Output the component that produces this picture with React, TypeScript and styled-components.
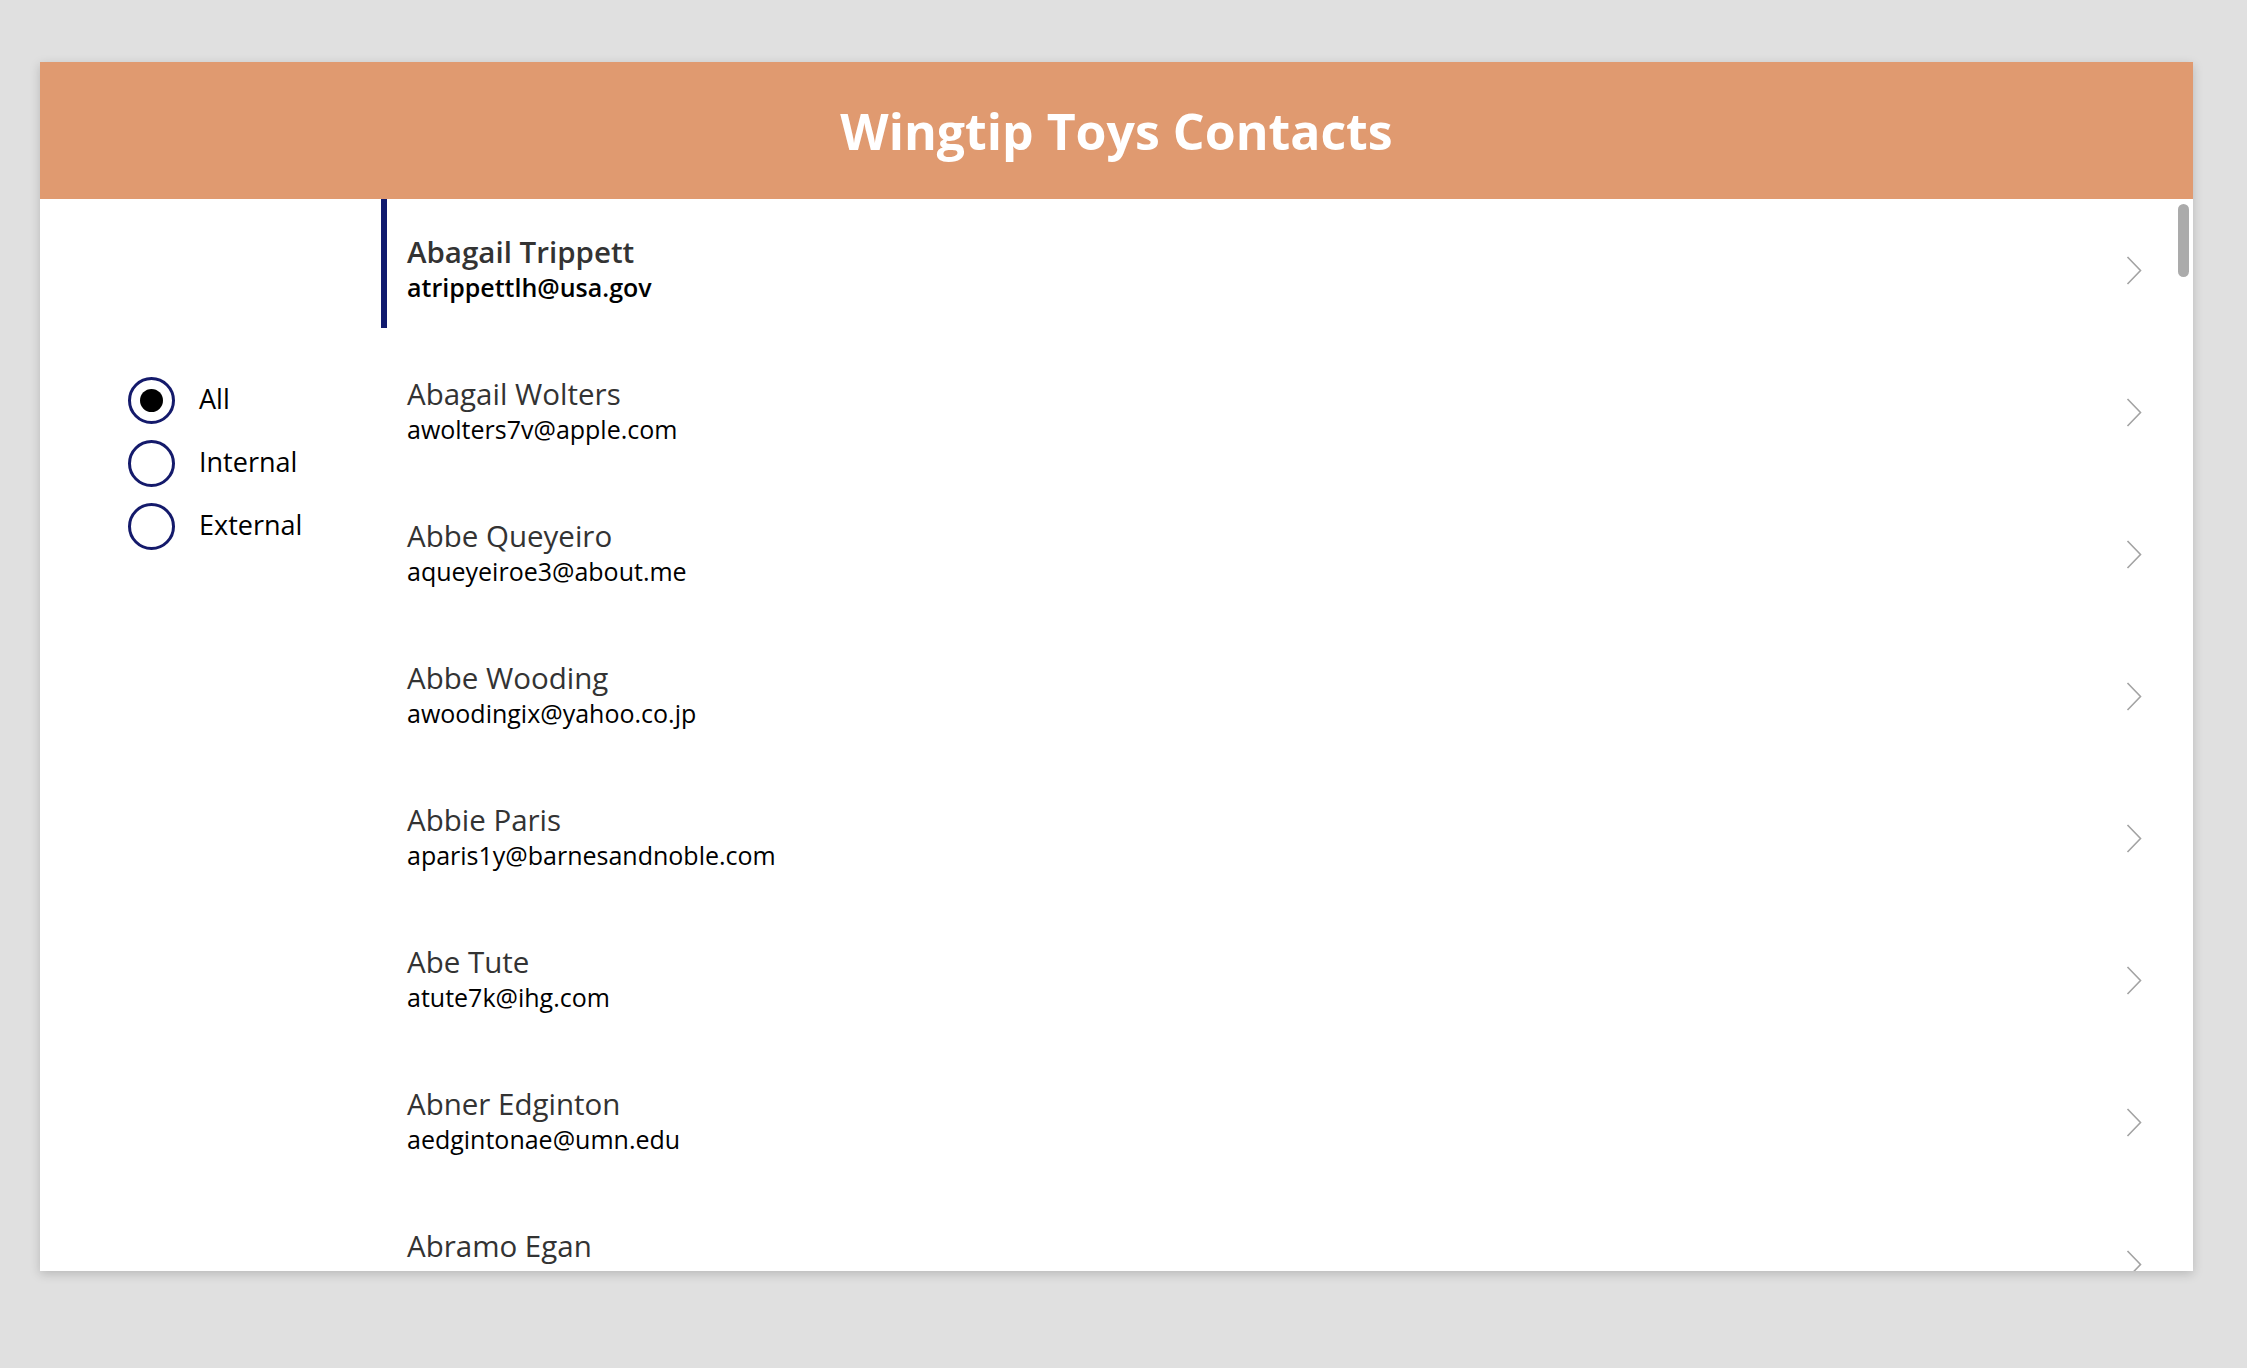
import React from "react";
import styled, { createGlobalStyle } from "styled-components";

const GlobalStyle = createGlobalStyle`
  html, body {
    margin: 0;
    padding: 0;
    background: #e0e0e0;
    font-family: "Open Sans", "Noto Sans", sans-serif;
  }
  * { box-sizing: border-box; }
`;

const Page = styled.div`
  width: 2247px;
  height: 1368px;
  padding: 62px 54px 0 40px;
  background: #e0e0e0;
`;

const Card = styled.div`
  position: relative;
  width: 2153px;
  height: 1209px;
  background: #ffffff;
  box-shadow: 0 3px 10px rgba(0, 0, 0, 0.18);
  display: flex;
  flex-direction: column;
  overflow: hidden;
`;

const Header = styled.header`
  height: 137px;
  flex: none;
  background: #e09a70;
  display: flex;
  align-items: center;
  justify-content: center;
`;

const Title = styled.h1`
  margin: 0;
  color: #ffffff;
  font-family: "Open Sans", sans-serif;
  font-weight: 700;
  font-size: 50px;
  line-height: 1;
  letter-spacing: 0;
`;

const Body = styled.div`
  flex: 1;
  display: flex;
  min-height: 0;
`;

const FilterPanel = styled.div`
  width: 341px;
  flex: none;
  padding: 170px 0 0 88px;
  display: flex;
  flex-direction: column;
`;

const RadioItem = styled.label`
  height: 63px;
  display: flex;
  align-items: center;
  gap: 24px;
  cursor: pointer;
`;

const RadioCircle = styled.span<{ $checked: boolean }>`
  width: 47px;
  height: 47px;
  flex: none;
  border-radius: 50%;
  border: 3px solid #141a6b;
  display: flex;
  align-items: center;
  justify-content: center;
  &::after {
    content: "";
    width: 23px;
    height: 23px;
    border-radius: 50%;
    background: #000000;
    display: ${(p) => (p.$checked ? "block" : "none")};
  }
`;

const RadioLabel = styled.span`
  font-size: 27px;
  color: #000000;
  line-height: 1;
  margin-top: -4px;
`;

const List = styled.div`
  flex: 1;
  display: flex;
  flex-direction: column;
  position: relative;
`;

const Row = styled.div<{ $selected: boolean }>`
  height: 142px;
  flex: none;
  position: relative;
  display: flex;
  align-items: flex-start;
  padding: 34px 51px 0 26px;
  &::before {
    content: "";
    position: absolute;
    left: 0;
    top: 0;
    width: 6px;
    height: 129px;
    background: #101a6e;
    display: ${(p) => (p.$selected ? "block" : "none")};
  }
`;

const TextBlock = styled.div`
  flex: 1;
  display: flex;
  flex-direction: column;
`;

const Name = styled.div<{ $selected: boolean }>`
  font-size: 29.5px;
  line-height: 38px;
  color: #333333;
  font-weight: ${(p) => (p.$selected ? 600 : 400)};
`;

const Email = styled.div<{ $selected: boolean }>`
  margin-top: 1px;
  font-size: 25px;
  line-height: 30px;
  color: #000000;
  font-weight: ${(p) => (p.$selected ? 600 : 400)};
`;

const Chevron = styled.svg`
  flex: none;
  width: 16px;
  height: 29px;
  margin-top: 23px;
`;

const ScrollThumb = styled.div`
  position: absolute;
  top: 5px;
  right: 4px;
  width: 11px;
  height: 73px;
  border-radius: 6px;
  background: #ababab;
`;

const contacts = [
  { name: "Abagail Trippett", email: "atrippettlh@usa.gov" },
  { name: "Abagail Wolters", email: "awolters7v@apple.com" },
  { name: "Abbe Queyeiro", email: "aqueyeiroe3@about.me" },
  { name: "Abbe Wooding", email: "awoodingix@yahoo.co.jp" },
  { name: "Abbie Paris", email: "aparis1y@barnesandnoble.com" },
  { name: "Abe Tute", email: "atute7k@ihg.com" },
  { name: "Abner Edginton", email: "aedgintonae@umn.edu" },
  { name: "Abramo Egan", email: "aegan2q@ucla.edu" },
];

const filters = ["All", "Internal", "External"];

export default function App() {
  return (
    <>
      <GlobalStyle />
      <Page>
        <Card>
          <Header>
            <Title>Wingtip Toys Contacts</Title>
          </Header>
          <Body>
            <FilterPanel>
              {filters.map((f, i) => (
                <RadioItem key={f}>
                  <RadioCircle $checked={i === 0} />
                  <RadioLabel>{f}</RadioLabel>
                </RadioItem>
              ))}
            </FilterPanel>
            <List>
              {contacts.map((c, i) => (
                <Row key={c.email} $selected={i === 0}>
                  <TextBlock>
                    <Name $selected={i === 0}>{c.name}</Name>
                    <Email $selected={i === 0}>{c.email}</Email>
                  </TextBlock>
                  <Chevron viewBox="0 0 16 29">
                    <polyline
                      points="1.5,1 14.5,14.5 1.5,28"
                      fill="none"
                      stroke="#a3a3a3"
                      strokeWidth="1.6"
                    />
                  </Chevron>
                </Row>
              ))}
              <ScrollThumb />
            </List>
          </Body>
        </Card>
      </Page>
    </>
  );
}
